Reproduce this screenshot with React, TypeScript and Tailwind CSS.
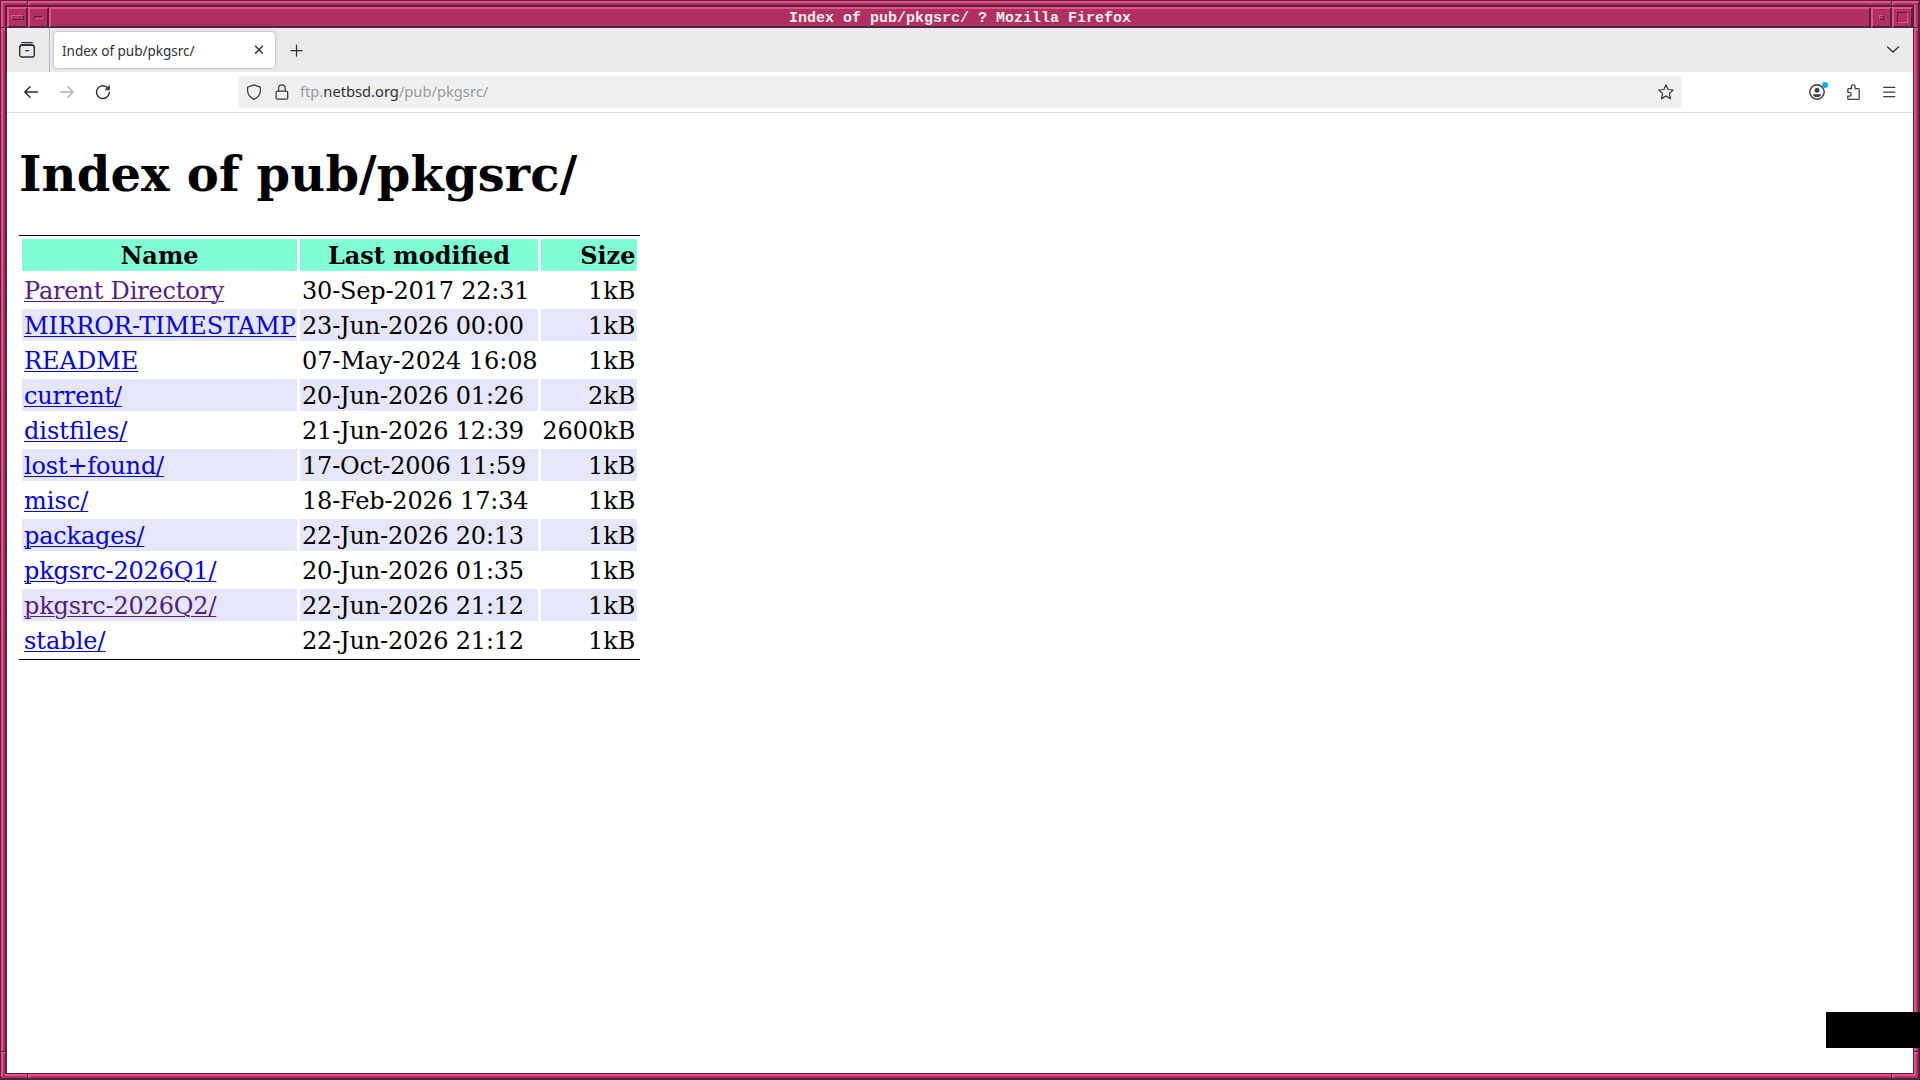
import type { ReactNode } from "react";
import clsx from "clsx";

const entries = [
  { name: "Parent Directory", modified: "30-Sep-2017 22:31", size: "1kB", visited: true },
  { name: "MIRROR-TIMESTAMP", modified: "23-Jun-2026 00:00", size: "1kB", wide: true },
  { name: "README", modified: "07-May-2024 16:08", size: "1kB", wide: true },
  { name: "current/", modified: "20-Jun-2026 01:26", size: "2kB" },
  { name: "distfiles/", modified: "21-Jun-2026 12:39", size: "2600kB", wide: true },
  { name: "lost+found/", modified: "17-Oct-2006 11:59", size: "1kB" },
  { name: "misc/", modified: "18-Feb-2026 17:34", size: "1kB", wide: true },
  { name: "packages/", modified: "22-Jun-2026 20:13", size: "1kB" },
  { name: "pkgsrc-2026Q1/", modified: "20-Jun-2026 01:35", size: "1kB" },
  { name: "pkgsrc-2026Q2/", modified: "22-Jun-2026 21:12", size: "1kB", visited: true },
  { name: "stable/", modified: "22-Jun-2026 21:12", size: "1kB", wide: true },
];

// Horizontal piece of the resize border
function HBar({ className, start, end }: { className: string; start?: boolean; end?: boolean }) {
  return (
    <div className={clsx("flex h-[7px] flex-col bg-[#4b2838]", className)}>
      <div className="h-px" />
      <div className="flex h-1">
        {start && <div className="w-0.5 bg-[#ee4d88]" />}
        <div className="flex-1 border-t-2 border-[#ee4d88] bg-[#b03060]" />
        {end && <div className="w-px bg-[#4b2838]" />}
      </div>
    </div>
  );
}

// Vertical piece of the resize border
function VBar({ className, start, end }: { className: string; start?: boolean; end?: boolean }) {
  return (
    <div className={clsx("flex w-[7px] bg-[#4b2838] pl-px", className)}>
      <div className="flex w-1 flex-col">
        {start && <div className="h-0.5 bg-[#ee4d88]" />}
        <div className="flex-1 border-l-2 border-[#ee4d88] bg-[#b03060]" />
        {end && <div className="h-px bg-[#4b2838]" />}
      </div>
    </div>
  );
}

// Mitred corner joints of the resize border: light and mid strokes on dark
const joints = {
  topLeft: { light: "M1 1h6v2H3v4H1z", mid: "M3 3h4v2H5v2H3z" },
  topRight: { light: "M0 1h6v1H5v1H0zM1 5h2v2H1z", mid: "M0 3h5v4H3V5H0z" },
  bottomLeft: { light: "M1 0h2v3H2v2H1zM5 1h2v2H5z", mid: "M3 0h2v3h2v2H2V3h1z" },
  bottomRight: { light: "M1 0h2v3H0V1h1z", mid: "M3 0h2v5H0V3h3z" },
};

function Joint({ at }: { at: keyof typeof joints }) {
  return (
    <svg viewBox="0 0 7 7" shapeRendering="crispEdges" className="size-[7px] shrink-0">
      <path d={joints[at].light} fill="#ee4d88" />
      <path d={joints[at].mid} fill="#b03060" />
    </svg>
  );
}

function Bevel({ className, children }: { className: string; children?: ReactNode }) {
  return (
    <div
      className={clsx(
        "flex h-[21px] items-center justify-center border-2 border-t-[#ee4d88] border-r-[#4b2838] border-b-[#4b2838] border-l-[#ee4d88] bg-[#b03060]",
        className,
      )}
    >
      {children}
    </div>
  );
}

function TitleBar() {
  return (
    <div className="flex h-[21px]">
      <Bevel className="w-[21px]">
        <div className="h-[5px] w-[13px] border border-t-[#ee4d88] border-r-[#4b2838] border-b-[#4b2838] border-l-[#ee4d88]" />
      </Bevel>
      <Bevel className="w-[21px]">
        <div className="h-[3px] w-[9px] border border-t-[#4b2838] border-r-[#ee4d88] border-b-[#ee4d88] border-l-[#4b2838]" />
      </Bevel>
      <Bevel className="flex-1">
        <span className="pt-0.5 font-['Liberation_Mono',monospace] text-[15px] leading-[17px] font-bold whitespace-pre text-[#ffeeee]">
          Index of pub/pkgsrc/ ? Mozilla Firefox
        </span>
      </Bevel>
      <Bevel className="w-[21px]">
        <div className="size-[5px] border border-t-[#ee4d88] border-r-[#4b2838] border-b-[#4b2838] border-l-[#ee4d88]" />
      </Bevel>
      <Bevel className="w-[21px]">
        <div className="size-[11px] border border-t-[#4b2838] border-r-[#ee4d88] border-b-[#ee4d88] border-l-[#4b2838]" />
      </Bevel>
    </div>
  );
}

function Icon({ className, children }: { className?: string; children: ReactNode }) {
  return (
    <svg
      viewBox="0 0 16 16"
      fill="none"
      stroke="currentColor"
      strokeWidth="1.25"
      strokeLinecap="round"
      strokeLinejoin="round"
      className={clsx("size-4 shrink-0", className)}
    >
      {children}
    </svg>
  );
}

function TabStrip() {
  return (
    <div className="flex h-11 items-center bg-[#eaeaec] text-[#2f2f34]">
      <div className="flex h-11 w-[43px] items-center border-r border-[#b4b4b8] pl-3">
        <Icon>
          <path d="M2.8 .7h10.4" />
          <rect x=".7" y="3.4" width="14.6" height="11.6" rx="2.2" strokeWidth="1.4" />
          <path d="M.9 4.4Q1.4 2.6 3 2.6h10q1.6 0 2.1 1.8M6.6 8.7h2.8" />
        </Icon>
      </div>
      <div className="ml-1 flex h-9 w-[221px] items-center rounded bg-white pr-2 pl-2 shadow-[0_0_3px_rgba(0,0,0,0.35)]">
        <span className="flex-1 pt-px text-[13.5px] leading-5">Index of pub/pkgsrc/</span>
        <Icon>
          <path d="M4.5 4.2l7 7M11.5 4.2l-7 7" strokeWidth="1.4" />
        </Icon>
      </div>
      <Icon className="ml-[13px]">
        <path d="M8.5 3v11M3 8.5h11" />
      </Icon>
      <div className="flex-1" />
      <Icon className="mr-[12px]">
        <path d="M2.5 5l5.5 5 5.5-5" />
      </Icon>
    </div>
  );
}

function NavBar() {
  return (
    <div className="flex h-[41px] items-center border-b border-[#dddddf] bg-white text-[#3a3a40]">
      <Icon className="ml-4 text-[#2b2a33]">
        <path d="M14.4 8H1.9M7 2.8L1.8 8 7 13.2" strokeWidth="1.4" />
      </Icon>
      <Icon className="ml-5 text-[#b2b2b6]">
        <path d="M1.6 8h12.5M9 2.8L14.2 8 9 13.2" strokeWidth="1.4" />
      </Icon>
      <Icon className="ml-5 text-[#2b2a33]">
        <path d="M14.3 8.2A6.4 6.4 0 1 1 12 3.2" strokeWidth="1.4" />
        <path d="M14.4 1.8v4h-4z" fill="currentColor" strokeWidth=".8" />
      </Icon>
      <div className="ml-[127px] flex h-8 w-[1444px] items-center rounded bg-[#f0f0f1] pr-2 pl-2">
        <Icon>
          <path d="M8 .8l6.4 2.3v3.3c0 4-2.4 6.9-6.4 9-4-2.1-6.4-5-6.4-9V3.1z" />
        </Icon>
        <Icon className="ml-3">
          <rect x="2.1" y="7.2" width="11.6" height="8" rx="1.6" />
          <path d="M4.6 7V4.2a3.3 3.3 0 0 1 6.6 0V7" />
        </Icon>
        <span className="ml-2.5 flex-1 pb-0.5 text-[14.7px] leading-5 text-[#98989b]">
          ftp.<span className="text-[#2f2f34]">netbsd.org</span>/pub/pkgsrc/
        </span>
        <Icon>
          <path d="M8 .9l2.1 4.6 5.1.5-3.8 3.4 1.1 5.2L8 12l-4.5 2.6 1.1-5.2L.8 6l5.1-.5z" />
        </Icon>
      </div>
      <div className="relative ml-[127px] size-4">
        <Icon>
          <circle cx="8" cy="8" r="7.2" strokeWidth="1.4" />
          <circle cx="8" cy="6.3" r="2.4" fill="currentColor" stroke="none" />
          <path d="M4 10.2h8q0 2.8-4 2.8t-4-2.8z" fill="currentColor" stroke="none" />
        </Icon>
        <div className="absolute -top-0.5 left-[13px] size-1.5 rounded-full bg-[#00b3f4]" />
      </div>
      <Icon className="ml-5">
        <path d="M2.8 7.2V5.4q0-.9.9-.9h2.6V2.7a1.9 1.9 0 0 1 3.8 0v1.8h3.2q.9 0 .9.9v9q0 .9-.9.9H3.7q-.9 0-.9-.9v-2.3h1.5a1.9 1.9 0 0 0 0-3.8H2.8z" />
      </Icon>
      <Icon className="ml-5">
        <path d="M2.6 3.4h11.2M2.6 8h11.2M2.6 12.6h11.2" />
      </Icon>
    </div>
  );
}

function Listing() {
  return (
    <div className="flex-1 bg-white px-3 font-['DejaVu_Serif',serif] text-2xl leading-[29px] text-black">
      <h1 className="mt-[33px] mb-8 text-5xl leading-[57px] font-bold tracking-[0.16px]">
        Index of pub/pkgsrc/
      </h1>
      <table className="w-[621px] table-fixed border-separate border-spacing-[3px] border-y border-black">
        <thead>
          <tr className="h-8 bg-[#7fffd4]">
            <th className="w-[275px] p-[1.5px] text-center font-bold">Name</th>
            <th className="w-[238px] p-[1.5px] text-center font-bold">Last modified</th>
            <th className="w-[96px] p-[1.5px] text-right font-bold">Size</th>
          </tr>
        </thead>
        <tbody>
          {entries.map((entry) => (
            <tr key={entry.name} className="h-8 whitespace-nowrap even:bg-[#e6e6fa]">
              <td className="pt-[3px] pl-0.5">
                <a
                  className={clsx(
                    "underline decoration-1 underline-offset-2",
                    entry.visited ? "text-[#551a8b]" : "text-[#0000ee]",
                    !entry.wide && "tracking-[-0.17px]",
                  )}
                >
                  {entry.name}
                </a>
              </td>
              <td
                className={clsx(
                  "pt-[3px] pl-0.5",
                  entry.modified.includes("May") ? "tracking-[-0.09px]" : "tracking-[-0.19px]",
                )}
              >
                {entry.modified}
              </td>
              <td className="pt-[3px] pr-[1.5px] text-right">{entry.size}</td>
            </tr>
          ))}
        </tbody>
      </table>
    </div>
  );
}

export default function App() {
  return (
    <div className="relative flex h-[1080px] w-[1920px] flex-col overflow-hidden bg-[#4b2838] font-['Noto_Sans',sans-serif]">
      <div className="flex">
        <Joint at="topLeft" />
        <HBar className="w-[21px]" end />
        <HBar className="flex-1" start end />
        <HBar className="w-[21px]" start />
        <Joint at="topRight" />
      </div>
      <div className="flex flex-1">
        <div className="flex flex-col">
          <VBar className="h-[21px]" end />
          <VBar className="flex-1" start end />
          <VBar className="h-[21px]" start />
        </div>
        <div className="flex flex-1 flex-col">
          <TitleBar />
          <TabStrip />
          <NavBar />
          <Listing />
        </div>
        <div className="flex flex-col">
          <VBar className="h-[21px]" end />
          <VBar className="flex-1" start end />
          <VBar className="h-[21px]" start />
        </div>
      </div>
      <div className="flex">
        <Joint at="bottomLeft" />
        <HBar className="w-[21px]" end />
        <HBar className="flex-1" start end />
        <HBar className="w-[21px]" start />
        <Joint at="bottomRight" />
      </div>
      <div className="absolute top-[1012px] right-0 h-9 w-[94px] bg-black" />
    </div>
  );
}
